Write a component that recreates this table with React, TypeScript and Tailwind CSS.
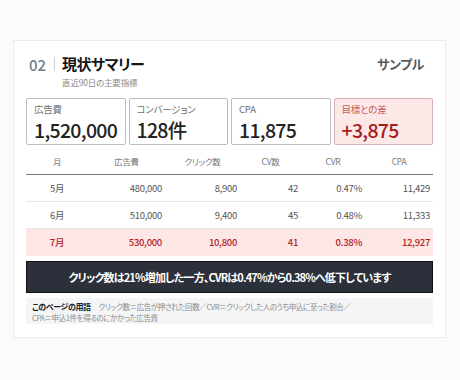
import React from "react";

const kpis = [
  { label: "広告費", value: "1,520,000", alert: false },
  { label: "コンバージョン", value: "128件", alert: false },
  { label: "CPA", value: "11,875", alert: false },
  { label: "目標との差", value: "+3,875", alert: true },
];

const rows = [
  { m: "5月", cost: "480,000", click: "8,900", cv: "42", cvr: "0.47%", cpa: "11,429", hl: false },
  { m: "6月", cost: "510,000", click: "9,400", cv: "45", cvr: "0.48%", cpa: "11,333", hl: false },
  { m: "7月", cost: "530,000", click: "10,800", cv: "41", cvr: "0.38%", cpa: "12,927", hl: true },
];

const cols = "grid grid-cols-[62px_77px_75px_61px_64px_68px]";

export default function App() {
  return (
    <div
      className="w-[460px] h-[380px] bg-[#fbfbfb] pt-[40px] pl-[13px] [font-feature-settings:'palt'] overflow-hidden"
      style={{ fontFamily: '"Noto Sans CJK JP", "Noto Sans", sans-serif' }}
    >
      <div className="w-[433px] h-[298px] bg-white border border-[#ececec] px-[12px] pt-[12px] pb-[12px] flex flex-col">
        {/* header */}
        <div className="flex items-start justify-between pl-[3px] pr-[9px]">
          <div className="flex items-start">
            <div className="flex items-center h-[22px]">
              <span className="text-[15px] font-medium text-[#767c8c] leading-none">02</span>
              <span className="w-px h-[14px] bg-[#d0d0d0] ml-[8px] mr-[7px]" />
            </div>
            <div className="flex flex-col">
              <span className="text-[15px] font-bold text-[#151515] leading-[22px] tracking-[-0.6px]">現状サマリー</span>
              <span className="text-[8.5px] text-[#8a8a8a] leading-[12px] mt-[1px] tracking-[-0.2px]">直近90日の主要指標</span>
            </div>
          </div>
          <span className="text-[13px] font-semibold text-[#5a5a5a] leading-[22px] tracking-[-0.4px]">サンプル</span>
        </div>

        {/* KPI cards */}
        <div className="grid grid-cols-4 gap-[3px] mt-[10px]">
          {kpis.map((k) => (
            <div
              key={k.label}
              className={
                "h-[47px] rounded-[2px] border pl-[7px] pt-[3px] flex flex-col " +
                (k.alert ? "bg-[#fde8e8] border-[#d8b0b0]" : "bg-white border-[#bcbcbc]")
              }
            >
              <span className={"text-[9.5px] leading-[14px] tracking-[-0.2px] " + (k.alert ? "text-[#c25a5a]" : "text-[#707070]")}>
                {k.label}
              </span>
              <span
                className={
                  "text-[19.5px] font-medium leading-[28px] tracking-[-0.7px] " + (k.alert ? "text-[#a51d1d]" : "text-[#222]")
                }
              >
                {k.value}
              </span>
            </div>
          ))}
        </div>

        {/* table */}
        <div className="mt-[4px]">
          <div className={cols + " h-[26px] items-center border-b-[1.5px] border-[#777] text-[8.5px] text-[#777] tracking-[-0.3px]"}>
            <span className="text-center">月</span>
            <span className="text-center">広告費</span>
            <span className="text-center">クリック数</span>
            <span className="text-center">CV数</span>
            <span className="text-center">CVR</span>
            <span className="text-center">CPA</span>
          </div>
          {rows.map((r) => (
            <div
              key={r.m}
              className={
                cols +
                " h-[27px] items-center text-[9.5px] tracking-[-0.3px] " +
                (r.hl ? "bg-[#fde6e6] text-[#b32424] font-medium" : "border-b border-[#e6e6e6] text-[#555]")
              }
            >
              <span className="text-center">{r.m}</span>
              <span className="text-right pr-[3px]">{r.cost}</span>
              <span className="text-right pr-[3px]">{r.click}</span>
              <span className="text-right pr-[3px]">{r.cv}</span>
              <span className="text-right pr-[3px]">{r.cvr}</span>
              <span className="text-right pr-[3px]">{r.cpa}</span>
            </div>
          ))}
        </div>

        {/* banner */}
        <div className="mt-[5px] h-[32px] bg-[#2b303b] border border-[#111] flex items-center justify-center">
          <span className="text-white font-bold text-[11px] tracking-[-0.85px]">
            クリック数は21%増加した一方、CVRは0.47%から0.38%へ低下しています
          </span>
        </div>

        {/* terms */}
        <div className="mt-[5px] bg-[#f4f5f7] px-[6px] pt-[3px] pb-[1px] text-[7.5px] leading-[11px] text-[#8a8a8a] tracking-[-0.4px]">
          <span className="font-bold text-[#222] text-[8px] mr-[8px]">このページの用語</span>
          クリック数＝広告が押された回数／CVR＝クリックした人のうち申込に至った割合／
          <br />
          CPA＝申込1件を得るのにかかった広告費
        </div>
      </div>
    </div>
  );
}
